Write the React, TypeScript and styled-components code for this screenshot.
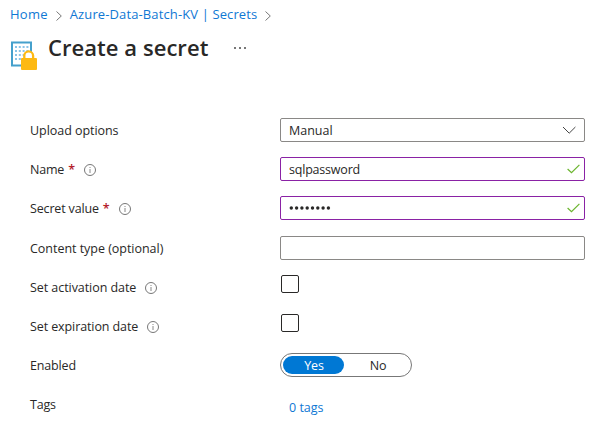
import React from "react";
import styled, { createGlobalStyle } from "styled-components";

const GlobalStyle = createGlobalStyle`
  * { box-sizing: border-box; }
  body {
    margin: 0;
    background: #fff;
    color: #292827;
    font-family: "Open Sans", "Noto Sans", sans-serif;
    font-size: 12.5px;
    line-height: 18px;
  }
`;

const Page = styled.main`
  width: 598px;
  height: 435px;
  overflow: hidden;
  background: #fff;
`;

const Text = styled.span<{ $track?: number }>`
  white-space: pre;
  letter-spacing: ${(p) => p.$track ?? 0}px;
`;

const FieldValue = styled(Text)`
  padding-top: 2px;
`;

const Breadcrumb = styled.nav`
  display: flex;
  align-items: center;
  height: 29px;
  padding: 0 0 2px 10px;
  font-size: 13px;
  color: #0f78d4;
`;

const Separator = styled.svg`
  width: 6px;
  height: 10px;
  margin: 4px 8px 0;
  flex: none;
`;

const Header = styled.header`
  display: flex;
  height: 82px;
  padding-left: 11px;
`;

const SecretIcon = styled.svg`
  width: 27px;
  height: 30px;
  margin-top: 12px;
  flex: none;
`;

const Title = styled.h1`
  margin: 3px 0 0 10px;
  width: 161px;
  font-size: 22px;
  line-height: 30px;
  font-weight: 600;
  letter-spacing: 0.05px;
  white-space: nowrap;
`;

const More = styled.svg`
  width: 12px;
  height: 2px;
  margin: 18px 0 0 25px;
`;

const Row = styled.div<{ $gap?: number }>`
  display: grid;
  grid-template-columns: 250px 305px;
  align-items: center;
  height: 39px;
  margin-top: ${(p) => p.$gap ?? 0}px;
  padding-left: 30px;
`;

const Label = styled.div`
  display: flex;
  align-items: center;
`;

const Required = styled.span`
  margin-left: 4px;
  color: #b3202b;
  font-weight: 600;
`;

const InfoSvg = styled.svg`
  width: 12px;
  height: 12px;
  margin: 1px 0 0 9px;
`;

const Field = styled.div<{ $valid?: boolean }>`
  display: flex;
  align-items: center;
  justify-content: space-between;
  height: 24px;
  margin-bottom: 1px;
  padding: 0 ${(p) => (p.$valid ? 4 : 5)}px 0 8px;
  border: 1px solid ${(p) => (p.$valid ? "#8a22a5" : "#8a8886")};
  border-radius: 2px;
`;

const Glyph = styled.svg<{ $w: number; $h: number }>`
  width: ${(p) => p.$w}px;
  height: ${(p) => p.$h}px;
`;

const Checkbox = styled.span`
  width: 18px;
  height: 18px;
  margin: 0 0 7px 1px;
  border: 1px solid #292827;
  border-radius: 2px;
`;

const Toggle = styled.div`
  display: flex;
  width: 132px;
  height: 24px;
  margin-bottom: 1px;
  padding: 2px;
  border: 1px solid #777;
  border-radius: 12px;
`;

const Choice = styled.span<{ $on?: boolean }>`
  width: ${(p) => (p.$on ? 62 : 66)}px;
  height: 18px;
  padding-left: ${(p) => (p.$on ? 1 : 3)}px;
  border-radius: 9px;
  text-align: center;
  line-height: 20px;
  letter-spacing: -0.1px;
  color: ${(p) => (p.$on ? "#fff" : "#292827")};
  background: ${(p) => (p.$on ? "#0078d4" : "transparent")};
`;

const TagLink = styled.a`
  padding: 6px 0 0 9px;
  color: #0f78d4;
`;

const Chevron = () => (
  <Separator viewBox="0 0 6 10">
    <path d="M.5.5 5.3 5 .5 9.5" fill="none" stroke="#777" />
  </Separator>
);

const Info = () => (
  <InfoSvg viewBox="0 0 12 12">
    <circle cx="6" cy="6" r="5.5" fill="none" stroke="#777" />
    <path d="M6 3v1M6 5v4" stroke="#888" />
  </InfoSvg>
);

const Check = () => (
  <Glyph $w={13} $h={10} viewBox="0 0 13 10">
    <path d="M.6 5 4.5 8.7 12.4.8" fill="none" stroke="#6bb52e" strokeWidth="1.2" />
  </Glyph>
);

type LabelProps = { text: string; track?: number; required?: boolean; info?: boolean };

const FieldLabel = ({ text, track, required, info }: LabelProps) => (
  <Label>
    <Text $track={track}>{text}</Text>
    {required && <Required>*</Required>}
    {info && <Info />}
  </Label>
);

export default function App() {
  return (
    <Page>
      <GlobalStyle />
      <Breadcrumb>
        <Text $track={0.25}>Home</Text>
        <Chevron />
        <Text $track={0.12}>Azure-Data-Batch-KV | Secrets</Text>
        <Chevron />
      </Breadcrumb>
      <Header>
        <SecretIcon viewBox="0 0 27 30">
          <path d="M1 1.5h19v23H1z" fill="#fff" stroke="#45a0cc" strokeWidth="2" />
          <path
            d="M4 6h14M4 10h14M4 14h14M4 18h14"
            stroke="#8bc4e8"
            strokeWidth="2"
            strokeDasharray="2 1.8"
          />
          <path d="M13.3 18v-3.2a4.4 4.4 0 0 1 8.8 0V18" fill="#fff" stroke="#fdb913" strokeWidth="2.3" />
          <rect x="10" y="17" width="16" height="12" rx="1" fill="#fdb913" />
        </SecretIcon>
        <Title>Create a secret</Title>
        <More viewBox="0 0 12 2">
          <path d="M0 1h2M5 1h2M10 1h2" stroke="#777" strokeWidth="2" />
        </More>
      </Header>
      <Row>
        <FieldLabel text="Upload options" track={-0.05} />
        <Field>
          <FieldValue>Manual</FieldValue>
          <Glyph $w={19} $h={9} viewBox="0 0 19 9">
            <path d="m3 1 6.2 6.2L15.4 1" fill="none" stroke="#444" />
          </Glyph>
        </Field>
      </Row>
      <Row>
        <FieldLabel text="Name" track={-0.2} required info />
        <Field $valid>
          <FieldValue $track={-0.2}>sqlpassword</FieldValue>
          <Check />
        </Field>
      </Row>
      <Row>
        <FieldLabel text="Secret value" track={-0.16} required info />
        <Field $valid>
          <Glyph $w={42} $h={4} viewBox="0 0 42 4">
            {Array.from({ length: 8 }, (_, i) => (
              <circle key={i} cx={2.3 + i * 5.3} cy="2" r="1.7" fill="#292827" />
            ))}
          </Glyph>
          <Check />
        </Field>
      </Row>
      <Row $gap={1}>
        <FieldLabel text="Content type (optional)" track={-0.03} />
        <Field />
      </Row>
      <Row>
        <FieldLabel text="Set activation date" track={-0.06} info />
        <Checkbox />
      </Row>
      <Row>
        <FieldLabel text="Set expiration date" track={-0.1} info />
        <Checkbox />
      </Row>
      <Row>
        <FieldLabel text="Enabled" track={-0.15} />
        <Toggle>
          <Choice $on>Yes</Choice>
          <Choice>No</Choice>
        </Toggle>
      </Row>
      <Row>
        <FieldLabel text="Tags" track={-0.2} />
        <TagLink>
          <Text>0 tags</Text>
        </TagLink>
      </Row>
    </Page>
  );
}
